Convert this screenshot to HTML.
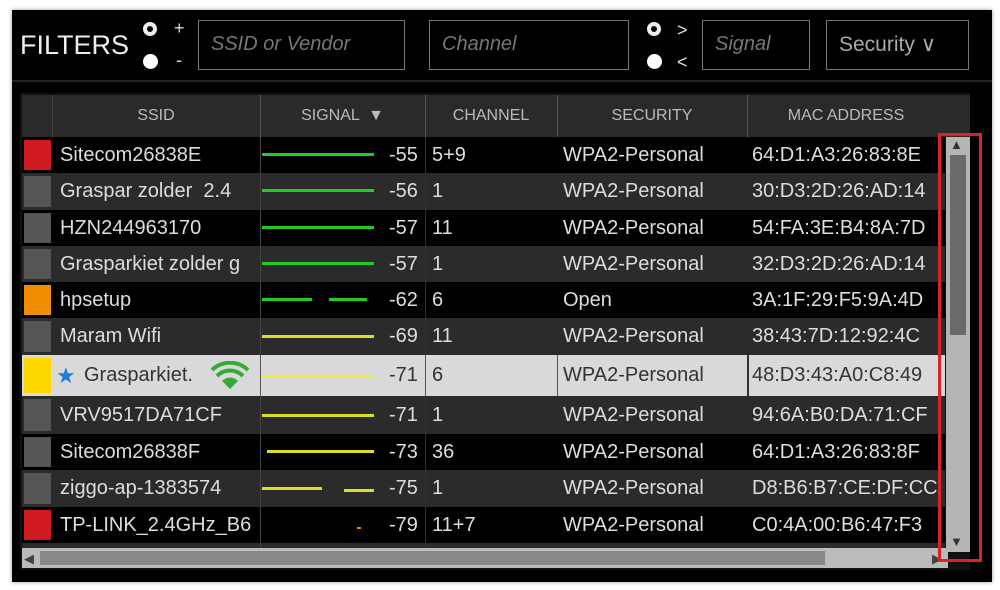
<!DOCTYPE html><html><head><style>
body{margin:0;width:1000px;height:590px;background:#fff;position:relative;overflow:hidden;font-family:"Liberation Sans",sans-serif;}
.a{position:absolute}
.panel{left:12px;top:10px;width:980px;height:572px;background:#000;box-shadow:0 0 4px #999}
.box{border:1.5px solid #777;color:#777;font-style:italic;font-size:20px;line-height:47px;padding-left:12px;box-sizing:border-box;height:50px;top:20px}
.row{left:22px;width:923px;color:#ddd;font-size:20px;overflow:hidden}
.row div{position:absolute;top:0;height:100%;display:flex;align-items:center;white-space:nowrap}
.hd{color:#bbb;font-size:16px;justify-content:center}
.v{left:367px}
</style></head><body>
<div class="a panel"></div>
<div class="a" style="left:20px;top:30px;color:#eee;font-size:27px">FILTERS</div>
<div class="a" style="left:143px;top:22px;width:14px;height:14px;border-radius:50%;border:4px solid #eee;box-sizing:border-box"></div>
<div class="a" style="left:143px;top:54px;width:15px;height:15px;border-radius:50%;background:#fff"></div>
<div class="a" style="left:174px;top:18px;color:#ddd;font-size:18px">+</div>
<div class="a" style="left:176px;top:50px;color:#ddd;font-size:18px">-</div>
<div class="a box" style="left:198px;width:207px">SSID or Vendor</div>
<div class="a box" style="left:429px;width:200px">Channel</div>
<div class="a" style="left:647px;top:22px;width:14px;height:14px;border-radius:50%;border:4px solid #eee;box-sizing:border-box"></div>
<div class="a" style="left:647px;top:54px;width:15px;height:15px;border-radius:50%;background:#fff"></div>
<div class="a" style="left:677px;top:20px;color:#ddd;font-size:18px">&gt;</div>
<div class="a" style="left:677px;top:52px;color:#ddd;font-size:18px">&lt;</div>
<div class="a box" style="left:702px;width:108px">Signal</div>
<div class="a box" style="left:826px;width:143px;font-style:normal;color:#aaa;font-size:21px">Security ∨</div>
<div class="a" style="left:12px;top:80px;width:980px;height:2px;background:#222"></div>
<div class="a" style="left:20px;top:93px;width:950px;height:477px;background:#111"></div>
<div class="a row" style="top:95px;height:42px;background:#2a2a2a;width:948px">
<div style="left:0;width:30px;border-right:1px solid #444"></div>
<div class="hd" style="left:30px;width:208px;border-right:1px solid #555">SSID</div>
<div class="hd" style="left:238px;width:165px;border-right:1px solid #555">SIGNAL &nbsp;▼</div>
<div class="hd" style="left:403px;width:132px;border-right:1px solid #555">CHANNEL</div>
<div class="hd" style="left:535px;width:190px;border-right:1px solid #555">SECURITY</div>
<div class="hd" style="left:725px;width:198px">MAC ADDRESS</div>
</div>
<div class="a row" style="top:137px;height:36px;background:#000"><div style="left:2px;width:27px;height:30px;top:3px;background:#d01a20"></div><div style="left:38px">Sitecom26838E</div><div style="left:240px;width:112px;top:16px;height:3px;background:#2c2"></div><div class="v">-55</div><div style="left:410px">5+9</div><div style="left:541px">WPA2-Personal</div><div style="left:730px">64:D1:A3:26:83:8E</div></div>
<div class="a row" style="top:173px;height:37px;background:#2b2b2b"><div style="left:2px;width:27px;height:31px;top:3px;background:#555"></div><div style="left:38px">Graspar zolder&nbsp; 2.4</div><div style="left:240px;width:112px;top:16px;height:3px;background:#2c2"></div><div class="v">-56</div><div style="left:410px">1</div><div style="left:541px">WPA2-Personal</div><div style="left:730px">30:D3:2D:26:AD:14</div></div>
<div class="a row" style="top:210px;height:36px;background:#000"><div style="left:2px;width:27px;height:30px;top:3px;background:#555"></div><div style="left:38px">HZN244963170</div><div style="left:240px;width:112px;top:16px;height:3px;background:#2c2"></div><div class="v">-57</div><div style="left:410px">11</div><div style="left:541px">WPA2-Personal</div><div style="left:730px">54:FA:3E:B4:8A:7D</div></div>
<div class="a row" style="top:246px;height:36px;background:#2b2b2b"><div style="left:2px;width:27px;height:30px;top:3px;background:#555"></div><div style="left:38px;width:200px;overflow:hidden">Grasparkiet zolder g</div><div style="left:240px;width:112px;top:16px;height:3px;background:#2c2"></div><div class="v">-57</div><div style="left:410px">1</div><div style="left:541px">WPA2-Personal</div><div style="left:730px">32:D3:2D:26:AD:14</div></div>
<div class="a row" style="top:282px;height:36px;background:#000"><div style="left:2px;width:27px;height:30px;top:3px;background:#f08c00"></div><div style="left:38px">hpsetup</div><div style="left:240px;width:50px;top:16px;height:3px;background:#2c2"></div><div style="left:307px;width:38px;top:16px;height:3px;background:#2c2"></div><div class="v">-62</div><div style="left:410px">6</div><div style="left:541px">Open</div><div style="left:730px">3A:1F:29:F5:9A:4D</div></div>
<div class="a row" style="top:318px;height:37px;background:#2b2b2b"><div style="left:2px;width:27px;height:31px;top:3px;background:#555"></div><div style="left:38px">Maram Wifi</div><div style="left:240px;width:112px;top:17px;height:3px;background:#dd2"></div><div class="v">-69</div><div style="left:410px">11</div><div style="left:541px">WPA2-Personal</div><div style="left:730px">38:43:7D:12:92:4C</div></div>
<div class="a row" style="top:355px;height:41px;background:#d9d9d9;color:#333"><div style="left:2px;width:27px;height:35px;top:3px;background:#ffd800"></div><div style="left:34px;color:#1e7be0;font-size:22px">★</div><div style="left:62px">Grasparkiet.</div><div style="left:188px"><svg width="40" height="30" viewBox="0 0 40 30"><path d="M20 28 L12 20 A11 11 0 0 1 28 20 Z" fill="#3a3"/><path d="M7 15 A18 18 0 0 1 33 15" stroke="#3a3" stroke-width="4" fill="none"/><path d="M2 9 A26 26 0 0 1 38 9" stroke="#3a3" stroke-width="4" fill="none"/></svg></div><div style="left:238px;width:1px;background:#555"></div><div style="left:240px;width:112px;top:20px;height:3px;background:#ee3"></div><div class="v">-71</div><div style="left:403px;width:1px;background:#555"></div><div style="left:410px">6</div><div style="left:535px;width:1px;background:#555"></div><div style="left:541px">WPA2-Personal</div><div style="left:725px;width:2px;background:#333"></div><div style="left:730px">48:D3:43:A0:C8:49</div></div>
<div class="a row" style="top:396px;height:38px;background:#2b2b2b"><div style="left:2px;width:27px;height:32px;top:3px;background:#555"></div><div style="left:38px">VRV9517DA71CF</div><div style="left:240px;width:112px;top:18px;height:3px;background:#dd2"></div><div class="v">-71</div><div style="left:410px">1</div><div style="left:541px">WPA2-Personal</div><div style="left:730px">94:6A:B0:DA:71:CF</div></div>
<div class="a row" style="top:434px;height:36px;background:#000"><div style="left:2px;width:27px;height:30px;top:3px;background:#555"></div><div style="left:38px">Sitecom26838F</div><div style="left:245px;width:107px;top:16px;height:3px;background:#dd2"></div><div class="v">-73</div><div style="left:410px">36</div><div style="left:541px">WPA2-Personal</div><div style="left:730px">64:D1:A3:26:83:8F</div></div>
<div class="a row" style="top:470px;height:37px;background:#2b2b2b"><div style="left:2px;width:27px;height:31px;top:3px;background:#555"></div><div style="left:38px">ziggo-ap-1383574</div><div style="left:240px;width:60px;top:17px;height:3px;background:#dd2"></div><div style="left:322px;width:30px;top:19px;height:3px;background:#dd2"></div><div class="v">-75</div><div style="left:410px">1</div><div style="left:541px">WPA2-Personal</div><div style="left:730px">D8:B6:B7:CE:DF:CC</div></div>
<div class="a row" style="top:507px;height:36px;background:#000"><div style="left:2px;width:27px;height:30px;top:3px;background:#d01a20"></div><div style="left:38px;width:200px;overflow:hidden">TP-LINK_2.4GHz_B6</div><div style="left:335px;width:4px;top:20px;height:2px;background:#e80"></div><div class="v">-79</div><div style="left:410px">11+7</div><div style="left:541px">WPA2-Personal</div><div style="left:730px">C0:4A:00:B6:47:F3</div></div>
<div class="a" style="left:22px;top:543px;width:923px;height:5px;background:#2b2b2b"></div>
<div class="a" style="left:260px;top:137px;width:1px;height:218px;background:#444"></div>
<div class="a" style="left:260px;top:396px;width:1px;height:152px;background:#444"></div>
<div class="a" style="left:425px;top:137px;width:1px;height:218px;background:#333"></div>
<div class="a" style="left:425px;top:396px;width:1px;height:152px;background:#333"></div>
<div class="a" style="left:22px;top:548px;width:926px;height:20px;background:#bbb"></div>
<div class="a" style="left:40px;top:551px;width:785px;height:14px;background:#888"></div>
<div class="a" style="left:24px;top:551px;color:#444;font-size:13px">◀</div>
<div class="a" style="left:932px;top:551px;color:#444;font-size:13px">▶</div>
<div class="a" style="left:946px;top:137px;width:24px;height:415px;background:#b5b5b5"></div>
<div class="a" style="left:950px;top:155px;width:16px;height:180px;background:#6a6a6a"></div>
<div class="a" style="left:950px;top:137px;color:#333;font-size:13px">▲</div>
<div class="a" style="left:950px;top:534px;color:#333;font-size:13px">▼</div>
<div class="a" style="left:938px;top:133px;width:44px;height:429px;border:3px solid #d8232a;box-sizing:border-box"></div>
</body></html>
